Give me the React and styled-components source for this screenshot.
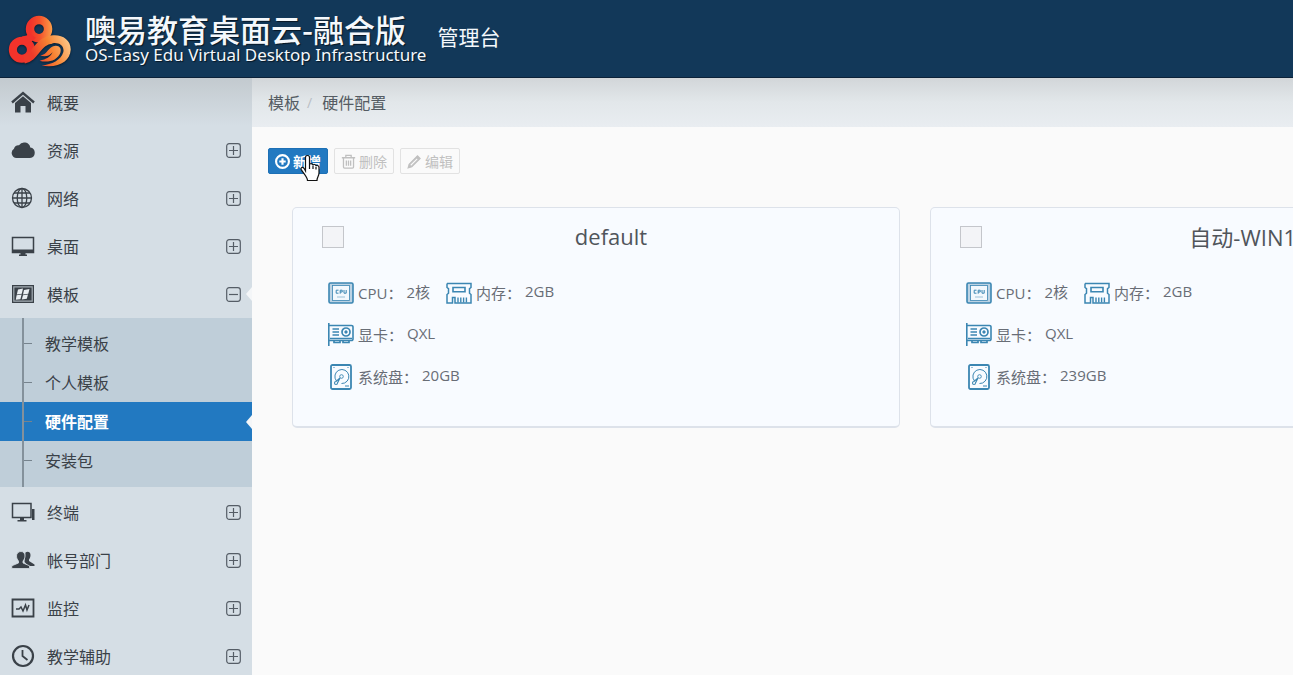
import React, { useState } from "react";
import styled, { createGlobalStyle, css } from "styled-components";

const menus = [
  { name: "概要", icon: "home" },
  { name: "资源", icon: "cloud", toggle: true },
  { name: "网络", icon: "globe", toggle: true },
  { name: "桌面", icon: "desktop", toggle: true },
  {
    name: "模板",
    icon: "template",
    toggle: true,
    children: ["教学模板", "个人模板", "硬件配置", "安装包"],
  },
  { name: "终端", icon: "terminal", toggle: true },
  { name: "帐号部门", icon: "users", toggle: true },
  { name: "监控", icon: "monitor", toggle: true },
  { name: "教学辅助", icon: "clock", toggle: true },
];

const hardwares = [
  { name: "default", cpu: "2核", memory: "2GB", gpu: "QXL", disk: "20GB" },
  { name: "自动-WIN10", cpu: "2核", memory: "2GB", gpu: "QXL", disk: "239GB" },
];

const menuIcons = {
  home: (
    <>
      <path d="M1 12.500 12 3 23 12.500" fill="none" stroke="currentColor" strokeWidth="2.400" />
      <path d="M4 13 12 6.200 20 13v9.500h-5.500V16h-5v6.500H4z" />
    </>
  ),
  cloud: (
    <path d="M5.500 20A5 5 0 0 1 3 10.800 4.200 4.200 0 0 1 8 7.300 6.200 6.200 0 0 1 19.300 9.500 5.300 5.300 0 0 1 19 20z" />
  ),
  globe: (
    <g fill="none" stroke="currentColor" strokeWidth="1.300">
      <circle cx="11" cy="12" r="9.500" />
      <ellipse cx="11" cy="12" rx="4.800" ry="9.500" />
      <path d="M11 2.500v19M1.500 12h19M3 7h16M3 17h16" />
    </g>
  ),
  desktop: (
    <>
      <path
        d="M1.500 3.500h21v15h-21z"
        fill="none"
        stroke="currentColor"
        strokeWidth="1.500"
      />
      <path d="M1 15.500h22v3.500H1zM9.500 19h5v1.500H16V22H8v-1.500h1.500z" />
    </>
  ),
  template: (
    <>
      <path d="M1 3h22v18H1z" />
      <path d="M2.800 4.800h18.400v14.400H2.800z" fill="none" stroke="#a4adb4" strokeWidth="1.200" />
      <path d="M7 7.500 12 6.500l-1.200 5.200-5 .8zM13 8l5.500-1-1.200 4.800-5.300.6zM5.600 13.200l5-.8-1.200 4.800-4.600.5zM12 13.200l5-.6-1.200 4.200-5 .7z" fill="#e9eef2" />
    </>
  ),
  terminal: (
    <>
      <path
        d="M1.500 3.500h18.500v14H1.500z"
        fill="none"
        stroke="currentColor"
        strokeWidth="1.500"
      />
      <path d="M9 18h4v2h2.500v1.500h-9V20H9zM21 9h2.500v11H21z" />
    </>
  ),
  users: (
    <>
      <path d="M14.500 4.500c2-1.500 5-.8 5 2.500 0 2-.8 3.500-1.500 4.500v1.500l5.500 3.500V18h-6l-4-4z" />
      <path
        d="M10 3.500c2.700 0 4 2 4 4.500 0 2-1 4-2 5v2l6.500 2.800v2.700H.8v-2.700L7.500 15v-2c-1-1-2-3-2-5 0-2.500 1.800-4.500 4.500-4.500z"
        stroke="#d5dee5"
        strokeWidth=".8"
      />
    </>
  ),
  monitor: (
    <g fill="none" stroke="currentColor">
      <path d="M1.500 3.500h21v17h-21z" strokeWidth="1.800" />
      <path d="M5 13h3l2-2 2 4 2.500-6 1.500 5 2-5" strokeWidth="1.500" />
    </g>
  ),
  clock: (
    <g fill="none" stroke="currentColor" strokeWidth="2.200">
      <circle cx="12" cy="12" r="10" />
      <path d="M11.500 6v6l5 4" strokeWidth="1.800" />
    </g>
  ),
};

const specIcons = {
  cpu: (
    <>
      <rect x="1" y="3" width="24" height="20" rx="1.500" fill="#bcd3e4" strokeWidth="1.600" />
      <rect x="4.500" y="5.500" width="17" height="15" fill="#f2f8fd" strokeWidth=".8" />
      <path d="M10.500 10.200H8.200v3h2.300M12.200 13.700v-3.500h2v1.800h-2M16 10v3.200h2.200V10" strokeWidth="1" />
      <path d="M9 17h8" strokeWidth=".8" opacity=".6" />
    </>
  ),
  memory: (
    <>
      <path d="M1 3.500h24v4l-1.500 1.200v4.500L25 14.500V23h-2.500M1 3.500v4l1.500 1.200v4.500L1 14.500V23h5.500v-5.500h2.500V23h14" strokeWidth="1.500" />
      <path d="M7 7.500h12v4.200H7z" strokeWidth="1.600" />
      <path d="M12 17.500v5M14.800 17.500v5M17.600 17.500v5M20.400 17.500v5" strokeWidth="1.400" />
    </>
  ),
  gpu: (
    <>
      <path d="M.8 1v23M1 3.500h22.500a1.500 1.500 0 0 1 1.500 1.500v12a1.500 1.500 0 0 1-1.500 1.500H1" strokeWidth="1.600" />
      <path d="M4.500 7h6.500M4.500 10h6.500M4.500 13h6.500" strokeWidth="1.700" />
      <circle cx="18" cy="10" r="4" strokeWidth="1.700" />
      <circle cx="18" cy="10" r="1.200" fill="currentColor" />
      <path d="M2 16.500h22M6 18.500v2h6v-2M15 18.500v2h6v-2" strokeWidth="1.700" />
    </>
  ),
  disk: (
    <>
      <rect x="3" y="1" width="20" height="24" rx="1.500" strokeWidth="1.800" />
      <path d="M8.500 17A7 7 0 1 1 13.500 19.500" strokeWidth="1" />
      <circle cx="13.500" cy="12.500" r="1.800" strokeWidth=".9" />
      <path d="m12 14-4 3.500a1.500 1.500 0 1 0 1.500 1.500zM17 22h4M5.500 3.500h1M19.500 3.500h1" strokeWidth="1.100" />
    </>
  ),
};

const Spec = ({ icon, label, value }) => (
  <SpecItem>
    <SpecIcon viewBox="0 0 26 26">{specIcons[icon]}</SpecIcon>
    <dt>{label}：</dt>
    <dd>{value}</dd>
  </SpecItem>
);

const HardwareCard = ({ hardware }) => (
  <Card>
    <CardHead>
      <CheckBox type="checkbox" aria-label={hardware.name} />
      <h2>{hardware.name}</h2>
    </CardHead>
    <SpecList>
      <SpecRow>
        <Spec icon="cpu" label="CPU" value={hardware.cpu} />
        <Spec icon="memory" label="内存" value={hardware.memory} />
      </SpecRow>
      <SpecRow>
        <Spec icon="gpu" label="显卡" value={hardware.gpu} />
      </SpecRow>
      <SpecRow>
        <Spec icon="disk" label="系统盘" value={hardware.disk} />
      </SpecRow>
    </SpecList>
  </Card>
);

const Logo = () => (
  <LogoSvg viewBox="22 38 198 166">
    <defs>
      <linearGradient id="ring" gradientUnits="userSpaceOnUse" x1="92" y1="0" x2="160" y2="0">
        <stop offset="0" stopColor="#f2332b" />
        <stop offset=".4" stopColor="#f4502a" />
        <stop offset="1" stopColor="#fba04a" />
      </linearGradient>
      <linearGradient id="wing" gradientUnits="userSpaceOnUse" x1="100" y1="170" x2="212" y2="120">
        <stop offset="0" stopColor="#ee3a2a" />
        <stop offset=".5" stopColor="#f88432" />
        <stop offset="1" stopColor="#fcc88a" />
      </linearGradient>
    </defs>
    <g fill="none">
      <circle cx="65" cy="148" r="28" stroke="#f2332b" strokeWidth="25" />
      <circle cx="118" cy="84" r="28" stroke="url(#ring)" strokeWidth="26" />
      <path
        d="M72 178C108 172 112 122 158 116"
        stroke="url(#wing)"
        strokeWidth="25"
      />
      <path d="M66 118C84 118 92 112 98 104" stroke="#f2332b" strokeWidth="24" />
    </g>
    <path
      d="M142 108C176 94 217 110 216 148C214 184 178 206 126 197C158 194 186 180 193 156C198 134 176 122 152 130z"
      fill="url(#wing)"
    />
    <path
      d="M122 166C146 164 144 138 170 136C182 136 188 146 184 157C176 180 146 190 120 182C140 178 154 170 160 156C152 166 138 172 122 166z"
      fill="url(#wing)"
    />
  </LogoSvg>
);

const App = () => {
  const [current, setCurrent] = useState("硬件配置");

  return (
    <>
      <GlobalStyle />
      <Page>
        <Header>
          <Logo />
          <Brand>
            <h1>噢易教育桌面云-融合版</h1>
            <p>OS-Easy Edu Virtual Desktop Infrastructure</p>
          </Brand>
          <Console>管理台</Console>
        </Header>
        <Body>
          <Sidebar>
            {menus.map((menu) => (
              <React.Fragment key={menu.name}>
                <MenuItem type="button" $open={!!menu.children}>
                  <MenuIcon viewBox="0 0 24 24">{menuIcons[menu.icon]}</MenuIcon>
                  <span>{menu.name}</span>
                  {menu.toggle && (
                    <ToggleIcon viewBox="0 0 15 15">
                      <rect x=".7" y=".7" width="13.600" height="13.600" rx="2.500" />
                      <path d={menu.children ? "M3 7.500h9" : "M3 7.500h9M7.500 3v9"} />
                    </ToggleIcon>
                  )}
                </MenuItem>
                {menu.children && (
                  <SubMenu>
                    {menu.children.map((child) => (
                      <li key={child}>
                        <SubLink
                          href="#"
                          $active={child === current}
                          onClick={() => setCurrent(child)}
                        >
                          {child}
                        </SubLink>
                      </li>
                    ))}
                  </SubMenu>
                )}
              </React.Fragment>
            ))}
          </Sidebar>
          <Main>
            <Breadcrumb>
              <a href="#">模板</a>
              <i>/</i>
              <span>{current}</span>
            </Breadcrumb>
            <Toolbar>
              <ToolButton type="button" $primary>
                <svg viewBox="0 0 14 14">
                  <circle cx="7" cy="7" r="6" strokeWidth="2" />
                  <path d="M7 4v6M4 7h6" strokeWidth="2" />
                </svg>
                新增
                <Pointer viewBox="0 0 20 28">
                  <path d="M5.500 17V3.500a2 2 0 0 1 4 0V11c0-2 3.500-2 3.500.5 0-1.500 3-1.500 3 .8 0-1.300 3-1.200 3 1V19c0 3-2 4-2 7.500H7.500C7.500 23 3 19 1.200 15.500c-.8-2 1.500-3 2.800-1.200z" />
                  <path d="M9.500 11v4M13 12v3M16 13v2.500" />
                </Pointer>
              </ToolButton>
              <ToolButton type="button" disabled>
                <svg viewBox="0 0 14 14">
                  <path d="M.8 3.500h12.400M4.500 3.500V1.200h5v2.300M2.300 3.500v8.700a1 1 0 0 0 1 1h7.400a1 1 0 0 0 1-1V3.500M5 6v5M7 6v5M9 6v5" strokeWidth="1.200" />
                </svg>
                删除
              </ToolButton>
              <ToolButton type="button" disabled>
                <svg viewBox="0 0 14 14">
                  <path d="M1 13 2 9.500 9.800 1.700l2.500 2.500L4.500 12z" fill="currentColor" strokeWidth="1" />
                  <path d="M3.500 10.500 9.500 4.500" stroke="#fafafa" strokeWidth="1" />
                </svg>
                编辑
              </ToolButton>
            </Toolbar>
            <CardGrid>
              {hardwares.map((hardware) => (
                <HardwareCard key={hardware.name} hardware={hardware} />
              ))}
            </CardGrid>
          </Main>
        </Body>
      </Page>
    </>
  );
};

const GlobalStyle = createGlobalStyle`
  * {
    box-sizing: border-box;
  }

  body {
    margin: 0;
    background: #fafafa;
    color: #4a4f55;
    font-family: "Open Sans", "Noto Sans CJK SC", sans-serif;
    font-size: 16px;
  }

  h1, h2, p, ul, dl, dd {
    margin: 0;
    padding: 0;
    font-weight: 400;
  }

  a {
    color: inherit;
    text-decoration: none;
  }

  button {
    font: inherit;
  }
`;

const Page = styled.div`
  display: flex;
  flex-direction: column;
  height: 100vh;
  overflow: hidden;
`;

const Header = styled.header`
  display: flex;
  flex-shrink: 0;
  align-items: center;
  height: 78px;
  padding: 0 8px;
  background: #123859;
  border-bottom: 1px solid #0c2239;
  color: #f4f8fc;
`;

const LogoSvg = styled.svg`
  width: 64px;
  height: 54px;
  margin-top: 4px;
  filter: drop-shadow(0 1px 1px rgba(0, 0, 0, 0.5));
`;

const Brand = styled.div`
  margin-left: 13px;
  text-shadow: 1px 1px 1px rgba(0, 0, 0, 0.6);

  & h1 {
    font-family: "Noto Sans CJK SC", sans-serif;
    font-size: 31px;
    font-weight: 500;
    line-height: 32px;
  }

  & p {
    font-family: "Noto Sans", sans-serif;
    font-size: 17px;
    line-height: 20px;
  }
`;

const Console = styled.span`
  margin-left: 11px;
  padding-bottom: 6px;
  font-size: 21px;
`;

const Body = styled.div`
  display: flex;
  flex: 1;
  min-height: 0;
`;

const Sidebar = styled.nav`
  flex: 0 0 252px;
  overflow: hidden;
  background: linear-gradient(#c3cacf, #d5dee5 48px);
`;

const notch = css`
  &::after {
    content: "";
    position: absolute;
    right: 0;
    top: calc(50% - 7px);
    border: 7px solid transparent;
    border-left: 0;
    border-right: 6px solid #f4f6f8;
  }
`;

const MenuItem = styled.button`
  position: relative;
  display: flex;
  align-items: center;
  width: 100%;
  height: 48px;
  padding: 0 11px;
  border: 0;
  background: none;
  color: #3a4148;
  text-align: left;
  cursor: pointer;

  & span {
    flex: 1;
    margin-left: 12px;
  }

  ${(props) => props.$open && notch}
`;

const MenuIcon = styled.svg`
  width: 24px;
  height: 24px;
  fill: currentColor;
`;

const ToggleIcon = styled.svg`
  width: 15px;
  height: 15px;
  fill: none;
  stroke: #555d66;
  stroke-width: 1.200;
`;

const SubMenu = styled.ul`
  position: relative;
  margin-bottom: 1px;
  padding: 6px 0 7px;
  background: #bfced9;
  list-style: none;

  &::before {
    content: "";
    position: absolute;
    z-index: 1;
    top: 0;
    bottom: 0;
    left: 22px;
    width: 2px;
    background: #84919b;
  }
`;

const SubLink = styled.a`
  position: relative;
  display: flex;
  align-items: center;
  height: 39px;
  padding: 0 0 1px 24px;
  color: #3a4148;

  &::before {
    content: "";
    width: 8px;
    height: 1px;
    margin-right: 13px;
    background: #76838d;
  }

  ${(props) =>
    props.$active &&
    css`
      background: #2279c1;
      color: #fff;
      font-weight: 600;
      ${notch}
    `}
`;

const Main = styled.main`
  flex: 1;
  min-width: 0;
  overflow: hidden;
`;

const Breadcrumb = styled.nav`
  display: flex;
  align-items: center;
  height: 49px;
  padding: 0 16px 1px;
  background: linear-gradient(#d2d6d9, #e2e7ea 24px, #e9edf1);
  color: #555c63;

  & i {
    margin: 0 10px 0 7px;
    color: #b9bec4;
    font-style: normal;
    font-size: 14px;
  }
`;

const Toolbar = styled.div`
  display: flex;
  gap: 6px;
  padding: 21px 16px 0;
`;

const ToolButton = styled.button`
  position: relative;
  display: flex;
  align-items: center;
  justify-content: center;
  gap: 3px;
  height: 26px;
  padding: 0 6px;
  border: 1px solid ${(props) => (props.$primary ? "#1d70b5" : "#e2e2e2")};
  border-radius: 2px;
  background: ${(props) => (props.$primary ? "#2279c1" : "#fafafa")};
  color: ${(props) => (props.$primary ? "#fff" : "#c0c0c0")};
  font-size: 14px;
  font-weight: ${(props) => (props.$primary ? 600 : 400)};

  & > svg:first-child {
    width: 15px;
    height: 15px;
    fill: none;
    stroke: currentColor;
  }
`;

const Pointer = styled.svg`
  position: absolute;
  top: 5px;
  left: 31px;
  width: 20px;
  height: 28px;
  fill: #fff;
  stroke: #111;
  stroke-width: 1.200;
  pointer-events: none;
`;

const CardGrid = styled.div`
  display: grid;
  grid-auto-flow: column;
  grid-auto-columns: 608px;
  gap: 30px;
  padding: 33px 40px;
`;

const Card = styled.article`
  padding: 18px 21px 36px 29px;
  border: 1px solid #dde2ea;
  border-bottom-width: 2px;
  border-radius: 5px;
  background: #f8fbff;
`;

const CardHead = styled.div`
  display: flex;
  align-items: center;
  height: 22px;

  & h2 {
    flex: 1;
    padding-bottom: 2px;
    color: #50555b;
    font-size: 22px;
    text-align: center;
  }
`;

const CheckBox = styled.input`
  appearance: none;
  width: 22px;
  height: 22px;
  margin: 0;
  border: 1px solid #c4c6cb;
  background: #f3f4f7;
`;

const SpecList = styled.div`
  display: flex;
  flex-direction: column;
  gap: 16px;
  margin-top: 32px;
  padding: 0 6px;
  color: #686d76;
  font-size: 15px;
`;

const SpecRow = styled.dl`
  display: flex;
  gap: 16px;
`;

const SpecItem = styled.div`
  display: flex;
  height: 26px;

  & dt {
    padding-top: 2px;
  }

  & dd {
    margin-left: 4px;
    padding-top: 1px;
  }
`;

const SpecIcon = styled.svg`
  width: 26px;
  height: 26px;
  margin-right: 4px;
  fill: none;
  color: #3b86b2;
  stroke: currentColor;
`;

export default App;
